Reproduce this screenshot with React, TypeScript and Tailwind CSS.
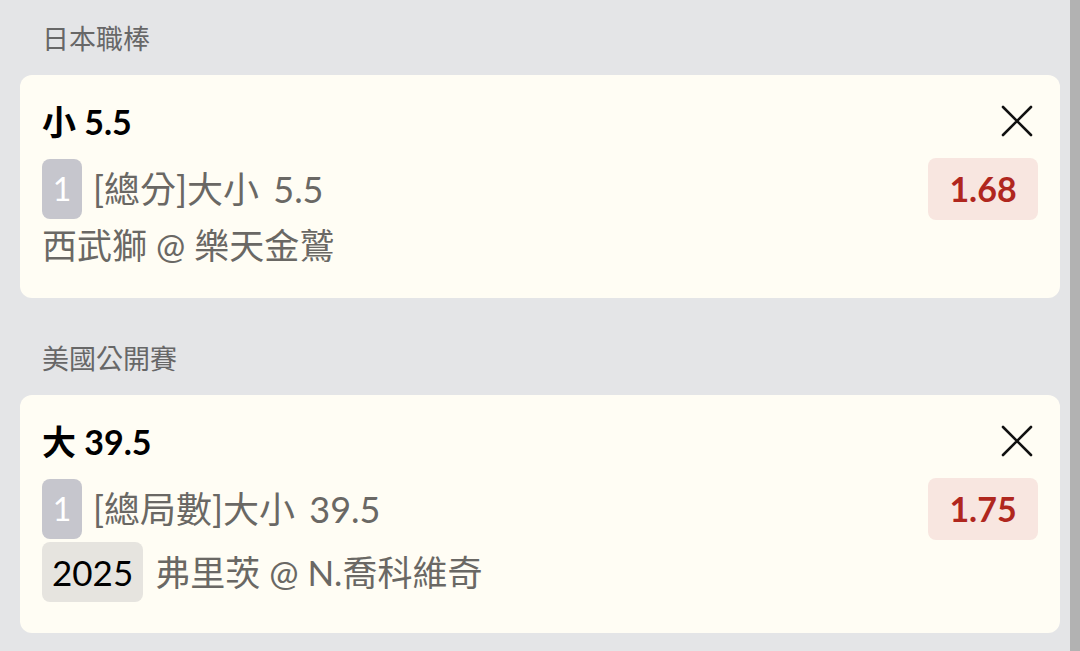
import React from "react";

type Bet = {
  league: string;
  pick: string;
  market: string;
  matchup: string;
  odds: string;
  tag?: string;
};

const bets: Bet[] = [
  {
    league: "日本職棒",
    pick: "小 5.5",
    market: "[總分]大小 5.5",
    matchup: "西武獅 @ 樂天金鷲",
    odds: "1.68",
  },
  {
    league: "美國公開賽",
    pick: "大 39.5",
    market: "[總局數]大小 39.5",
    matchup: "弗里茨 @ N.喬科維奇",
    odds: "1.75",
    tag: "2025",
  },
];

function CloseIcon() {
  return (
    <svg width="32" height="32" viewBox="0 0 32 32" fill="none">
      <path
        d="M2 2L30 30M30 2L2 30"
        stroke="#111"
        strokeWidth="2.6"
        strokeLinecap="round"
      />
    </svg>
  );
}

function BetCard({ bet }: { bet: Bet }) {
  return (
    <div className="flex flex-col">
      <div className="h-[36px] flex items-center px-[22px] text-[27px] leading-none text-[#676767]">
        {bet.league}
      </div>
      <div className="mt-[19px] bg-[#fffdf4] rounded-[12px] px-[22px] pt-[27px] pb-[29px] flex flex-col">
        <div className="flex items-center justify-between h-[40px]">
          <span className="text-[34px] leading-none font-bold text-black">{bet.pick}</span>
          <span className="mr-[5px] -mt-[2px]">
            <CloseIcon />
          </span>
        </div>
        <div className="mt-[16px] flex items-center justify-between h-[62px]">
          <div className="flex items-center gap-[11px]">
            <span className="w-[40px] h-[60px] rounded-[8px] bg-[#c6c6cd] text-white text-[32px] leading-none flex items-center justify-center">
              1
            </span>
            <span className="text-[36px] leading-none text-[#6a6864] [word-spacing:5px]">
              {bet.market}
            </span>
          </div>
          <span className="w-[110px] h-[62px] rounded-[8px] bg-[#f8e6e0] text-[#b0271e] text-[34px] leading-none font-bold flex items-center justify-center">
            {bet.odds}
          </span>
        </div>
        <div
          className={`flex items-center gap-[12px] ${
            bet.tag ? "mt-[2px] mb-[2px] h-[60px]" : "mt-[1px] h-[48px]"
          }`}
        >
          {bet.tag && (
            <span className="h-[60px] px-[10px] rounded-[8px] bg-[#e6e4df] text-black text-[35px] leading-none flex items-center">
              {bet.tag}
            </span>
          )}
          <span className="text-[35px] leading-none text-[#6a6864]">{bet.matchup}</span>
        </div>
      </div>
    </div>
  );
}

export default function App() {
  return (
    <div
      className="w-[1080px] h-[651px] overflow-hidden flex bg-[#e4e5e7]"
      style={{ fontFamily: '"Lato", "Noto Sans CJK TC", sans-serif' }}
    >
      <div className="flex-1 pl-[20px] pr-[10px] pt-[20px] flex flex-col gap-[42px]">
        {bets.map((bet) => (
          <BetCard key={bet.league} bet={bet} />
        ))}
      </div>
      <div className="w-[10px] h-full bg-[#b2b2b2]" />
    </div>
  );
}
